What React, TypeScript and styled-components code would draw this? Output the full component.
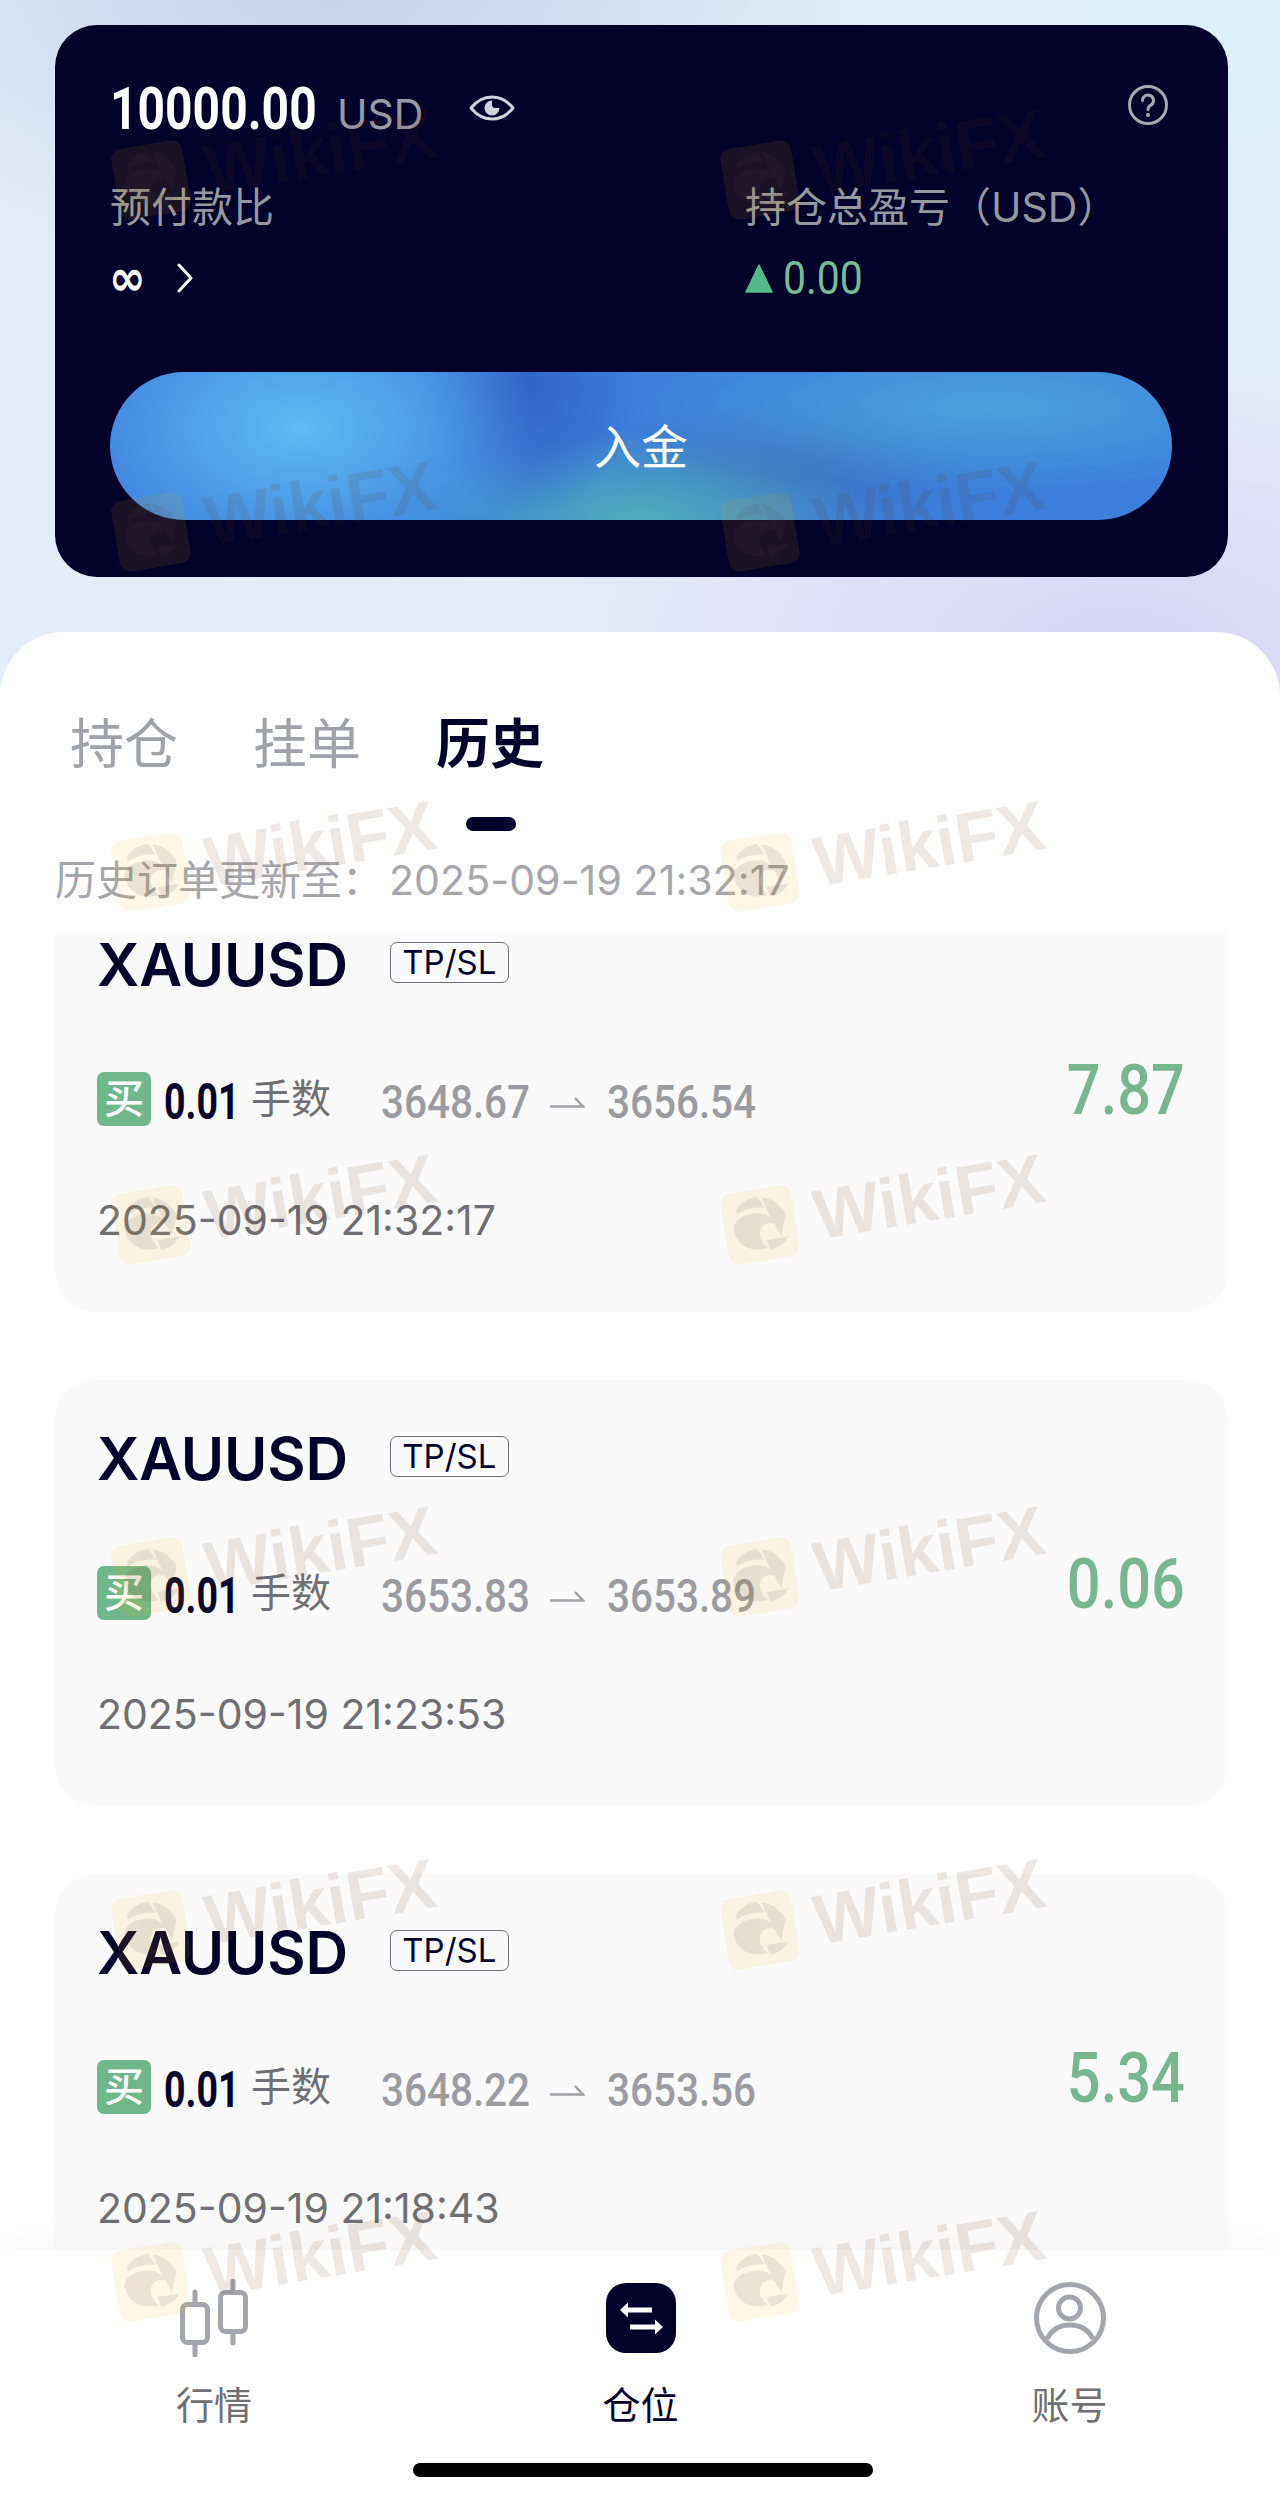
import React from "react";
import styled, { createGlobalStyle } from "styled-components";

const NAVY = "#02012a";
const CJK = `Inter, "Noto Sans CJK SC", sans-serif`;
const NUM = `Roboto, sans-serif`;

const Global = createGlobalStyle`
  html, body { margin: 0; padding: 0; background: #fff; }
  * { box-sizing: border-box; }
  #root { width: 1280px; height: 2498px; }
`;

const Page = styled.div`
  position: relative;
  width: 1280px;
  height: 2498px;
  overflow: hidden;
  display: flex;
  flex-direction: column;
  padding-top: 25px;
  font-family: ${CJK};
  background:
    radial-gradient(560px 300px at 330px -20px, #c5d3ea 0%, rgba(197, 211, 234, 0) 100%),
    radial-gradient(620px 320px at 1120px 650px, #d9d4f6 0%, rgba(217, 212, 246, 0) 100%),
    radial-gradient(500px 420px at 1240px 0px, #dcf1f9 0%, rgba(220, 241, 249, 0) 100%),
    linear-gradient(160deg, #e2ebf8 0%, #e3f1fa 55%, #eef1fa 100%);
`;

const AccountCard = styled.section`
  flex: none;
  height: 552px;
  margin: 0 52px 0 55px;
  padding: 56px 55px 0;
  border-radius: 42px;
  background: ${NAVY};
  color: #fff;
`;

const BalanceRow = styled.div`
  display: flex;
  align-items: center;
  height: 60px;
`;

const BalanceGroup = styled.div`
  display: flex;
  align-items: baseline;
  gap: 20px;
`;

const Amount = styled.span`
  display: inline-block;
  width: 207px;
  font: 700 60px/60px ${NUM};
  white-space: nowrap;
  transform: scaleX(0.8);
  transform-origin: left center;
`;

const Currency = styled.span`
  font: 400 41px/60px Inter, sans-serif;
  color: #9b9ba8;
`;

const EyeIcon = styled.svg`
  margin: 0 0 7px 46px;
  flex: none;
`;

const HelpIcon = styled.svg`
  margin: 0 5px 12px auto;
  flex: none;
`;

const StatsGrid = styled.div`
  display: grid;
  grid-template-columns: 635px 1fr;
  margin-top: 41px;
`;

const StatLabel = styled.div`
  font-size: 41px;
  line-height: 50px;
  color: #97979f;
  white-space: nowrap;
`;

const StatValue = styled.div`
  display: flex;
  align-items: center;
  height: 50px;
  margin-top: 21px;
`;

const InfinityMark = styled.span`
  font: 700 50px/50px "DejaVu Sans", sans-serif;
  width: 35px;
  white-space: nowrap;
  transform: translateX(-1px) scaleX(0.88);
  transform-origin: left center;
`;

const Chevron = styled.svg`
  margin-left: 32px;
`;

const ProfitValue = styled.span`
  display: inline-block;
  width: 77px;
  margin-left: 10px;
  font: 400 47px/50px ${NUM};
  color: #78bd93;
  white-space: nowrap;
  transform: scaleX(0.87);
  transform-origin: left center;
`;

const DepositButton = styled.button`
  display: block;
  width: 1062px;
  height: 148px;
  margin-top: 69px;
  border: 0;
  border-radius: 74px;
  color: #fff;
  font: 400 47px/148px ${CJK};
  background:
    radial-gradient(240px 150px at 190px 55px, #5fbcf2 0%, rgba(95, 188, 242, 0) 100%),
    radial-gradient(110px 130px at 418px 15px, #3162c6 0%, rgba(49, 98, 198, 0) 100%),
    radial-gradient(230px 90px at 530px 148px, #4fadb8 0%, rgba(79, 173, 184, 0) 100%),
    radial-gradient(360px 85px at 880px 35px, #4ba2da 0%, rgba(75, 162, 218, 0) 100%),
    radial-gradient(190px 70px at 680px 95px, #3c72bf 0%, rgba(60, 114, 191, 0) 100%),
    #3c7fdc;
`;

const Sheet = styled.section`
  flex: 1;
  min-height: 0;
  margin-top: 55px;
  display: flex;
  flex-direction: column;
  background: #fff;
  border-radius: 64px 64px 0 0;
`;

const Tabs = styled.div`
  display: flex;
  gap: 75px;
  padding: 83px 0 0 70px;
`;

const Tab = styled.div<{ $active?: boolean }>`
  position: relative;
  font-size: 54px;
  line-height: 60px;
  font-weight: ${(p) => (p.$active ? 700 : 400)};
  color: ${(p) => (p.$active ? NAVY : "#a0a1a9")};
  &::after {
    content: "";
    display: ${(p) => (p.$active ? "block" : "none")};
    position: absolute;
    left: 30px;
    top: 102px;
    width: 50px;
    height: 14px;
    border-radius: 7px;
    background: ${NAVY};
  }
`;

const UpdatedNote = styled.div`
  margin: 79px 0 27px 55px;
  height: 52px;
  font-size: 41px;
  line-height: 52px;
  color: #a6a6ac;
  white-space: nowrap;
`;

const UpdatedTime = styled.span`
  margin-left: 6px;
  letter-spacing: 0.1px;
`;

const OrderViewport = styled.div`
  flex: 1;
  min-height: 0;
  overflow: hidden;
`;

const OrderList = styled.div`
  display: flex;
  flex-direction: column;
  gap: 68px;
  margin: -47px 52px 0 55px;
`;

const OrderCard = styled.article`
  flex: none;
  height: 426px;
  padding: 42px 42px 0;
  border-radius: 40px;
  background: #fafafa;
`;

const OrderHead = styled.div`
  display: flex;
  align-items: center;
  height: 74px;
`;

const Symbol = styled.span`
  font: 600 59px/60px Inter, sans-serif;
  color: ${NAVY};
  letter-spacing: -0.2px;
`;

const OrderTag = styled.span`
  margin: 0 0 6px 42px;
  width: 119px;
  height: 41px;
  border: 1.5px solid #6f6f78;
  border-radius: 7px;
  font: 400 33px/38px Inter, sans-serif;
  color: ${NAVY};
  text-align: center;
`;

const OrderRow = styled.div`
  display: flex;
  align-items: center;
  margin-top: 70px;
  height: 54px;
`;

const BuyBadge = styled.span`
  width: 54px;
  height: 54px;
  border-radius: 7px;
  background: #70b88b;
  color: #fff;
  font-size: 40px;
  font-weight: 500;
  line-height: 54px;
  text-align: center;
`;

const Lots = styled.span`
  display: inline-block;
  width: 69px;
  margin: 5px 0 0 13px;
  font: 700 50px/54px ${NUM};
  color: ${NAVY};
  white-space: nowrap;
  transform: scaleX(0.75);
  transform-origin: left center;
`;

const LotsUnit = styled.span`
  margin-left: 18px;
  font-size: 40px;
  line-height: 54px;
  color: #6f6f74;
`;

const Price = styled.span<{ $first?: boolean }>`
  display: inline-block;
  width: 146px;
  margin: 5px 0 0 ${(p) => (p.$first ? "50px" : "0")};
  font: 500 47px/54px ${NUM};
  color: #9b9ca1;
  white-space: nowrap;
  transform: scaleX(0.86);
  transform-origin: left center;
`;

const PriceArrow = styled.svg`
  margin: 5px 22px 0;
  flex: none;
`;

const Profit = styled.span`
  margin: 0 1px 18px auto;
  font: 500 70px/54px ${NUM};
  color: #77b68f;
  transform: scaleX(0.85);
  transform-origin: right center;
`;

const OrderTime = styled.div`
  margin-top: 68px;
  font-size: 41px;
  line-height: 52px;
  color: #6f6f74;
  white-space: nowrap;
`;

const BottomNav = styled.nav`
  flex: none;
  height: 248px;
  padding-top: 29px;
  background: #fff;
  box-shadow: 0 -14px 30px rgba(0, 0, 0, 0.025);
  position: relative;
`;

const NavItems = styled.div`
  display: grid;
  grid-template-columns: 428px 425px 433px;
`;

const NavItem = styled.div<{ $active?: boolean }>`
  display: flex;
  flex-direction: column;
  align-items: center;
  color: ${(p) => (p.$active ? NAVY : "#6f6f74")};
`;

const NavIconBox = styled.div`
  height: 78px;
  display: flex;
  align-items: center;
  justify-content: center;
`;

const NavLabel = styled.span`
  margin-top: 23px;
  font-size: 38px;
  line-height: 50px;
`;

const HomeBar = styled.div`
  width: 460px;
  height: 14px;
  margin: 33px 0 0 413px;
  border-radius: 7px;
  background: #000;
`;

const WatermarkLayer = styled.div`
  position: absolute;
  inset: 0;
  pointer-events: none;
  display: grid;
  grid-template-columns: repeat(2, 609px);
  grid-template-rows: 352px 340px repeat(5, 352.5px);
  padding: 140px 0 0 115px;
  align-items: start;
`;

const Stamp = styled.div`
  display: flex;
  align-items: center;
  gap: 19px;
  height: 80px;
  transform: rotate(-9.5deg);
  transform-origin: 36px 50%;
`;

const StampText = styled.span`
  font: 700 70px/80px "Liberation Sans", sans-serif;
  color: rgba(100, 50, 20, 0.115);
  white-space: nowrap;
`;

const StampLogo = () => (
  <svg width="72" height="72" viewBox="0 0 72 72">
    <rect width="72" height="72" rx="11" fill="rgba(250, 180, 0, 0.1)" />
    <g fill="rgba(80, 65, 70, 0.11)">
      <path d="M9 36C10 30 16 25 26 24C36 22 44 26 49 32L50 37C44 34 38 35 35 42C33 48 35 54 40 60C22 62 10 52 9 36Z" />
      <path d="M15 17C22 10 30 7 38 8L44 20C34 17 24 18 15 22Z" />
      <path d="M42 9C52 11 60 20 63 30L55 50L46 24Z" />
      <path d="M40 52H62C58 58 50 62 42 62Z" />
    </g>
  </svg>
);

const orders = [
  { open: "3648.67", close: "3656.54", profit: "7.87", time: "2025-09-19 21:32:17" },
  { open: "3653.83", close: "3653.89", profit: "0.06", time: "2025-09-19 21:23:53" },
  { open: "3648.22", close: "3653.56", profit: "5.34", time: "2025-09-19 21:18:43" },
];

export default function App() {
  return (
    <Page>
      <Global />
      <AccountCard>
        <BalanceRow>
          <BalanceGroup>
            <Amount>10000.00</Amount>
            <Currency>USD</Currency>
          </BalanceGroup>
          <EyeIcon width="46" height="26" viewBox="0 0 46 26" fill="none">
            <path d="M2 13C8 5.500 15 2 23 2s15 3.500 21 11c-6 7.500-13 11-21 11S8 20.500 2 13z" stroke="#d2d2dc" strokeWidth="3" strokeLinejoin="round" />
            <path d="M23 5.500a7.500 7.500 0 1 0 7.500 7.500h-4a3.500 3.500 0 0 1-3.500-3.500z" fill="#d2d2dc" />
          </EyeIcon>
          <HelpIcon width="40" height="40" viewBox="0 0 40 40" fill="none">
            <circle cx="20" cy="20" r="18.500" stroke="#a9a9b3" strokeWidth="3" />
            <path d="M14.500 15.500a5.500 5.500 0 1 1 8.500 4.600c-2 1.300-3 2.300-3 4.400" stroke="#a9a9b3" strokeWidth="3" strokeLinecap="round" />
            <circle cx="20" cy="30" r="2" fill="#a9a9b3" />
          </HelpIcon>
        </BalanceRow>
        <StatsGrid>
          <div>
            <StatLabel>预付款比</StatLabel>
            <StatValue>
              <InfinityMark>∞</InfinityMark>
              <Chevron width="16" height="30" viewBox="0 0 16 30" fill="none">
                <path d="M2 2l12 13L2 28" stroke="#fff" strokeWidth="3" strokeLinecap="round" strokeLinejoin="round" />
              </Chevron>
            </StatValue>
          </div>
          <div>
            <StatLabel>持仓总盈亏（USD）</StatLabel>
            <StatValue>
              <svg width="28" height="29" viewBox="0 0 28 29">
                <path d="M14 1L27 28H1z" fill="#55b888" stroke="#55b888" strokeWidth="1.500" strokeLinejoin="round" />
              </svg>
              <ProfitValue>0.00</ProfitValue>
            </StatValue>
          </div>
        </StatsGrid>
        <DepositButton>入金</DepositButton>
      </AccountCard>

      <Sheet>
        <Tabs>
          <Tab>持仓</Tab>
          <Tab>挂单</Tab>
          <Tab $active>历史</Tab>
        </Tabs>
        <UpdatedNote>
          历史订单更新至：<UpdatedTime>2025-09-19 21:32:17</UpdatedTime>
        </UpdatedNote>
        <OrderViewport>
          <OrderList>
            {orders.map((o) => (
              <OrderCard key={o.time}>
                <OrderHead>
                  <Symbol>XAUUSD</Symbol>
                  <OrderTag>TP/SL</OrderTag>
                </OrderHead>
                <OrderRow>
                  <BuyBadge>买</BuyBadge>
                  <Lots>0.01</Lots>
                  <LotsUnit>手数</LotsUnit>
                  <Price $first>{o.open}</Price>
                  <PriceArrow width="36" height="14" viewBox="0 0 36 14" fill="none">
                    <path d="M1 11.500h33L26 3" stroke="#a0a0a5" strokeWidth="2.500" />
                  </PriceArrow>
                  <Price>{o.close}</Price>
                  <Profit>{o.profit}</Profit>
                </OrderRow>
                <OrderTime>{o.time}</OrderTime>
              </OrderCard>
            ))}
          </OrderList>
        </OrderViewport>
        <BottomNav>
          <NavItems>
            <NavItem>
              <NavIconBox>
                <svg width="72" height="78" viewBox="0 0 72 78" fill="none" stroke="#a5a5ae" strokeWidth="5" strokeLinecap="round">
                  <rect x="4.500" y="25.500" width="25" height="38" rx="5" />
                  <path d="M17 13v12.500M17 63.500V76" />
                  <rect x="42.500" y="13.500" width="25" height="39" rx="5" />
                  <path d="M55 2v11.500M55 52.500V64" />
                </svg>
              </NavIconBox>
              <NavLabel>行情</NavLabel>
            </NavItem>
            <NavItem $active>
              <NavIconBox>
                <svg width="70" height="70" viewBox="0 0 70 70">
                  <rect width="70" height="70" rx="20" fill={NAVY} />
                  <path d="M14 27l8-7.500v5h24v5H22v5zM57 44l-8 7.500v-5H24v-5h25v-5z" fill="#fff" />
                </svg>
              </NavIconBox>
              <NavLabel>仓位</NavLabel>
            </NavItem>
            <NavItem>
              <NavIconBox>
                <svg width="72" height="72" viewBox="0 0 72 72" fill="none" stroke="#a5a5ae" strokeWidth="5">
                  <circle cx="36" cy="36" r="33.500" />
                  <circle cx="35.500" cy="26" r="11" />
                  <path d="M13 57c5-10 14-14 23-14s18 4 23 14" />
                </svg>
              </NavIconBox>
              <NavLabel>账号</NavLabel>
            </NavItem>
          </NavItems>
          <HomeBar />
        </BottomNav>
      </Sheet>

      <WatermarkLayer>
        {Array.from({ length: 14 }, (_, i) => (
          <Stamp key={i}>
            <StampLogo />
            <StampText>WikiFX</StampText>
          </Stamp>
        ))}
      </WatermarkLayer>
    </Page>
  );
}
